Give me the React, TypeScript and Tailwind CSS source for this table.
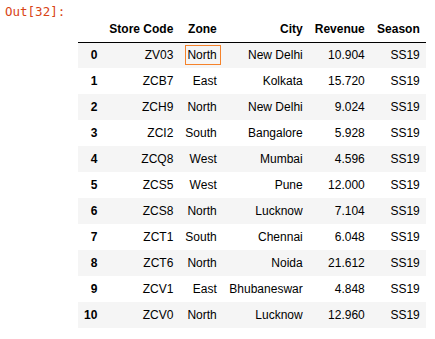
const rows: [string, string, string, string, string][] = [
  ["ZV03", "North", "New Delhi", "10.904", "SS19"],
  ["ZCB7", "East", "Kolkata", "15.720", "SS19"],
  ["ZCH9", "North", "New Delhi", "9.024", "SS19"],
  ["ZCI2", "South", "Bangalore", "5.928", "SS19"],
  ["ZCQ8", "West", "Mumbai", "4.596", "SS19"],
  ["ZCS5", "West", "Pune", "12.000", "SS19"],
  ["ZCS8", "North", "Lucknow", "7.104", "SS19"],
  ["ZCT1", "South", "Chennai", "6.048", "SS19"],
  ["ZCT6", "North", "Noida", "21.612", "SS19"],
  ["ZCV1", "East", "Bhubaneswar", "4.848", "SS19"],
  ["ZCV0", "North", "Lucknow", "12.960", "SS19"],
];

const widths = ["w-[25px]", "w-[76px]", "w-[43px]", "w-[86px]", "w-[62px]", "w-[55px]"];
const headers = ["", "Store Code", "Zone", "City", "Revenue", "Season"];

export default function App() {
  return (
    <div className="flex h-[339px] w-[435px] bg-white pl-[5px] pt-[1px] font-['Liberation_Sans',Arial,sans-serif] text-[12px] text-black">
      <div className="w-[73px] shrink-0 pt-[2px] font-['DejaVu_Sans_Mono',monospace] text-[12.5px] leading-[17px] text-[#d84315]">
        Out[32]:
      </div>
      <table className="mt-[14px] h-fit table-fixed border-collapse">
        <thead>
          <tr className="h-[27px] border-b border-black">
            {headers.map((h, i) => (
              <th key={i} className={`${widths[i]} px-[6px] pt-[1px] text-right font-bold`}>
                {h}
              </th>
            ))}
          </tr>
        </thead>
        <tbody>
          {rows.map((r, i) => (
            <tr key={i} className={`h-[26px] ${i % 2 === 0 ? "bg-[#f5f5f5]" : ""}`}>
              <th className="px-[6px] text-right font-bold">{i}</th>
              <td className="px-[6px] text-right">{r[0]}</td>
              <td className="px-[6px] text-right">
                {i === 0 ? (
                  <span className="-mr-[4px] inline-block border border-[#f5822a] pl-[1px] pr-[3px] leading-[18px]">
                    {r[1]}
                  </span>
                ) : (
                  r[1]
                )}
              </td>
              <td className="px-[6px] text-right">{r[2]}</td>
              <td className="px-[6px] text-right">{r[3]}</td>
              <td className="px-[6px] text-right">{r[4]}</td>
            </tr>
          ))}
        </tbody>
      </table>
    </div>
  );
}
